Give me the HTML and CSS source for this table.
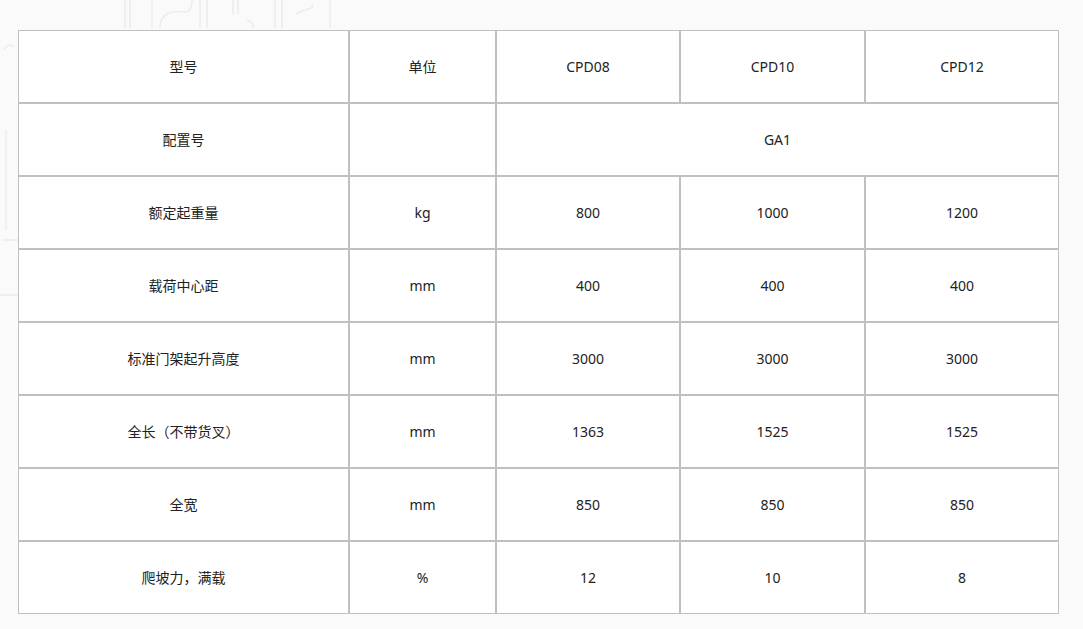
FILE: index.html
```html
<!DOCTYPE html>
<html lang="zh">
<head>
<meta charset="utf-8">
<link rel="stylesheet" href="styles.css">
</head>
<body>
<div class="page">
  <svg class="decor" width="1083" height="629" viewBox="0 0 1083 629" aria-hidden="true">
    <g fill="none" stroke="#ececec" stroke-width="1.5">
      <path d="M125 0 V28 M130 0 V28"/>
      <path d="M152 0 V28"/>
      <path d="M160 28 C160 14 170 10 185 12 C192 12 192 4 192 0"/>
      <path d="M200 0 V28 M207 0 V28"/>
      <path d="M233 0 V14 M238 0 V14 M247 20 C252 22 255 26 252 28"/>
      <path d="M275 0 V28 M282 0 V28"/>
      <path d="M296 14 C305 8 315 10 312 4"/>
      <path d="M330 0 V28"/>
      <path d="M4 50 C6 45 10 44 14 46"/>
      <path d="M2 240 H18 M0 295 H18"/>
      <path d="M6 130 V230"/>
    </g>
  </svg>
  <table class="spec">
    <colgroup>
      <col class="c1"><col class="c2"><col class="c3"><col class="c4"><col class="c5">
    </colgroup>
    <tbody>
      <tr><td>型号</td><td>单位</td><td>CPD08</td><td>CPD10</td><td>CPD12</td></tr>
      <tr><td>配置号</td><td></td><td colspan="3">GA1</td></tr>
      <tr><td>额定起重量</td><td>kg</td><td>800</td><td>1000</td><td>1200</td></tr>
      <tr><td>载荷中心距</td><td>mm</td><td>400</td><td>400</td><td>400</td></tr>
      <tr><td>标准门架起升高度</td><td>mm</td><td>3000</td><td>3000</td><td>3000</td></tr>
      <tr><td>全长（不带货叉）</td><td>mm</td><td>1363</td><td>1525</td><td>1525</td></tr>
      <tr><td>全宽</td><td>mm</td><td>850</td><td>850</td><td>850</td></tr>
      <tr><td>爬坡力，满载</td><td>%</td><td>12</td><td>10</td><td>8</td></tr>
    </tbody>
  </table>
</div>
</body>
</html>
```
FILE: styles.css
```css
html, body {
  margin: 0;
  padding: 0;
  background: #fafafa;
}
.page {
  position: relative;
  width: 1083px;
  height: 629px;
  padding: 30px 0 0 18px;
  box-sizing: border-box;
  overflow: hidden;
}
.decor {
  position: absolute;
  left: 0;
  top: 0;
}
.spec {
  position: relative;
  border-collapse: separate;
  border-spacing: 0;
  table-layout: fixed;
  width: 1041px;
  background: #fff;
  font-family: "Noto Sans", "Noto Sans CJK SC", sans-serif;
  font-size: 14px;
  color: #222;
}
.c1 { width: 331px; }
.c2 { width: 147px; }
.c3 { width: 184px; }
.c4 { width: 185px; }
.c5 { width: 194px; }
.spec td {
  box-sizing: border-box;
  height: 73px;
  padding: 0;
  border: 1px solid #c0c0c0;
  text-align: center;
  vertical-align: middle;
  line-height: 20px;
}
```
